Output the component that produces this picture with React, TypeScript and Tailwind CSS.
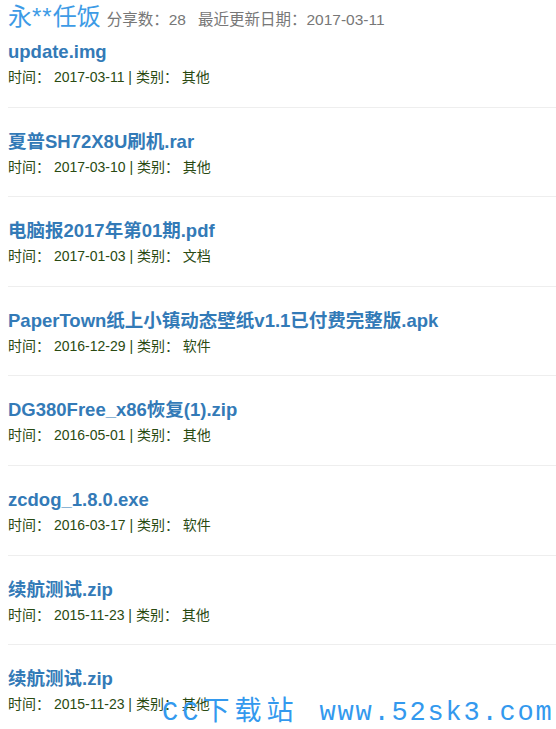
const items = [
  { name: "update.img", date: "2017-03-11", type: "其他" },
  { name: "夏普SH72X8U刷机.rar", date: "2017-03-10", type: "其他" },
  { name: "电脑报2017年第01期.pdf", date: "2017-01-03", type: "文档" },
  { name: "PaperTown纸上小镇动态壁纸v1.1已付费完整版.apk", date: "2016-12-29", type: "软件" },
  { name: "DG380Free_x86恢复(1).zip", date: "2016-05-01", type: "其他" },
  { name: "zcdog_1.8.0.exe", date: "2016-03-17", type: "软件" },
  { name: "续航测试.zip", date: "2015-11-23", type: "其他" },
  { name: "续航测试.zip", date: "2015-11-23", type: "其他" },
];

const App = () => {
  return (
    <div
      className="relative w-full h-[729px] overflow-hidden bg-white pl-2"
      style={{ fontFamily: '"Liberation Sans", Arial, "Noto Sans CJK SC", sans-serif' }}
    >
      <div className="flex items-baseline h-[34px] pt-[2px]">
        <span className="text-[24px] leading-[30px] text-[#3d9be6] whitespace-pre">
          永<span className="tracking-[1px]">**</span>任饭
        </span>
        <span className="ml-[6px] text-[15.5px] text-[#777]">分享数：28</span>
        <span className="ml-[12px] text-[15.5px] text-[#777]">最近更新日期：2017-03-11</span>
      </div>
      {items.map((item, index) => (
        <div
          key={index}
          className={`${index ? "border-t pt-[24px]" : "pt-[8px]"} border-[#eee] pb-[19.6px]`}
        >
          <h4 className="text-[18.5px] leading-[20px] font-bold text-[#337ab7]">{item.name}</h4>
          <p className="mt-[5px] text-[14px] leading-[20px] text-[#2a4a12] whitespace-pre">
            {"时间： " + item.date + " | 类别： " + item.type}
          </p>
        </div>
      ))}
      <div
        className="absolute left-[162px] top-[697px] flex items-baseline text-[27px] leading-[32px] text-[#3399ee] whitespace-pre"
        style={{ fontFamily: '"Liberation Mono", "Noto Sans CJK SC", monospace' }}
      >
        <span className="tracking-[4px]">CC</span>
        <span className="tracking-[5px]">下载站</span>
        <span className="ml-[21px] tracking-[1.8px]">www.52sk3.com</span>
      </div>
    </div>
  );
};

export default App;
